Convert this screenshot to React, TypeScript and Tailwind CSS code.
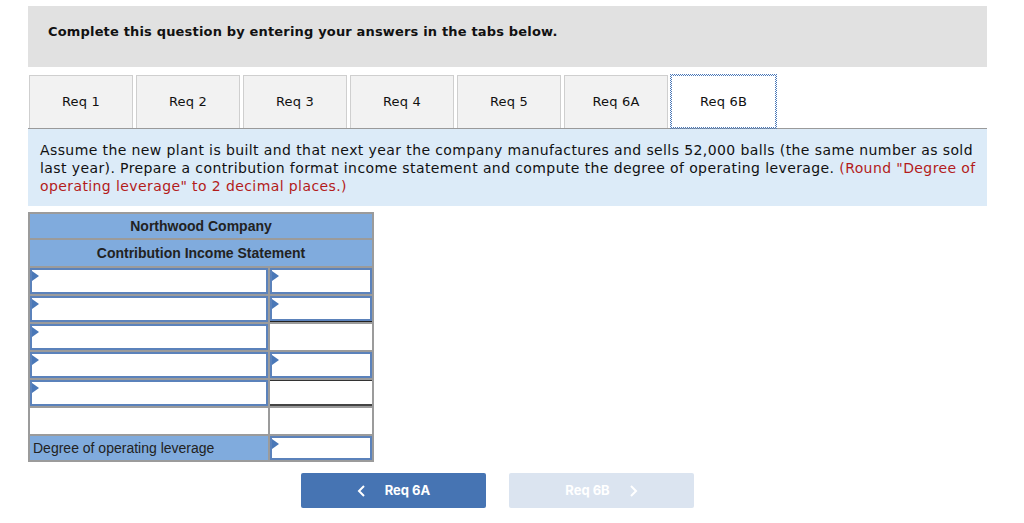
import React from "react";

const tabs = ["Req 1", "Req 2", "Req 3", "Req 4", "Req 5", "Req 6A", "Req 6B"];

function Marker() {
  return (
    <span className="absolute left-0 top-[1px] w-0 h-0 border-y-[5px] border-y-transparent border-l-[7px] border-l-[#4a78b8]" />
  );
}

function InputCell({ marker = true }: { marker?: boolean }) {
  return (
    <div className="relative h-full border-2 border-[#5b82bb] bg-white">
      {marker && <Marker />}
    </div>
  );
}

type Row = { left: "input" | "plain" | "label"; right: "input" | "plain"; rightExtra?: string; h: string };

const rows: Row[] = [
  { left: "input", right: "input", h: "h-[28px]" },
  { left: "input", right: "input", rightExtra: "border-b border-b-[#222]", h: "h-[28px]" },
  { left: "input", right: "plain", h: "h-[28px]" },
  { left: "input", right: "input", h: "h-[28px]" },
  { left: "input", right: "plain", rightExtra: "border-t border-t-[#333] border-b-2 border-b-[#444]", h: "h-[28px]" },
  { left: "plain", right: "plain", h: "h-[28px]" },
  { left: "label", right: "input", h: "h-[26px]" },
];

export default function App() {
  return (
    <div className="w-[1024px] h-[523px] bg-white font-['DejaVu_Sans',Verdana,sans-serif] text-[#111]">
      <div className="pt-[6px] ml-[28px] w-[959px]">
        {/* Header */}
        <div className="h-[61px] bg-[#e1e1e1] pl-[20px] pt-[16px]">
          <p className="text-[13px] tracking-[0.17px] font-bold leading-[20px]">
            Complete this question by entering your answers in the tabs below.
          </p>
        </div>

        {/* Tabs */}
        <div className="mt-[8px] flex gap-[3px] pl-[1px] border-b border-[#9a9a9a]">
          {tabs.map((t, i) => {
            const active = i === tabs.length - 1;
            return (
              <div
                key={t}
                className={
                  active
                    ? "w-[105px] h-[53px] flex items-center justify-center text-[13px] tracking-[0.2px] bg-white border border-dotted border-[#4a78b8] outline outline-1 outline-dotted outline-[#4a78b8] -mb-px"
                    : "w-[104px] h-[53px] flex items-center justify-center text-[13px] tracking-[0.2px] bg-[#f2f2f2] border border-[#cfcfcf] border-b-0"
                }
              >
                {t}
              </div>
            );
          })}
        </div>

        {/* Instructions */}
        <div className="bg-[#dcebf8] pl-[12px] pt-[12px] h-[77px] text-[14px] tracking-[0.4px] leading-[18px] whitespace-nowrap">
          Assume the new plant is built and that next year the company manufactures and sells 52,000 balls (the same
          number as sold
          <br />
          last year). Prepare a contribution format income statement and compute the degree of operating leverage.{" "}
          <span className="text-[#b31b1b]">(Round "Degree of</span>
          <br />
          <span className="text-[#b31b1b]">operating leverage" to 2 decimal places.)</span>
        </div>

        {/* Table */}
        <div className="mt-[6px] w-[346px] border-2 border-[#9b9b9b] font-['Liberation_Sans',Arial,sans-serif]">
          <div className="h-[26px] bg-[#80abdd] border-b-2 border-[#9b9b9b] flex items-center justify-center text-[14px] font-bold text-[#222]">
            Northwood Company
          </div>
          <div className="h-[26px] bg-[#80abdd] flex items-center justify-center text-[14px] font-bold text-[#222]">
            Contribution Income Statement
          </div>
          {rows.map((r, i) => (
            <div key={i} className={`flex ${r.h} border-t-2 border-[#9b9b9b]`}>
              <div className="w-[240px] h-full border-r-2 border-[#9b9b9b]">
                {r.left === "input" && <InputCell />}
                {r.left === "plain" && <div className="h-full bg-white" />}
                {r.left === "label" && (
                  <div className="h-full bg-[#80abdd] flex items-center pl-[3px] text-[14px] text-[#222]">
                    Degree of operating leverage
                  </div>
                )}
              </div>
              <div className={`flex-1 h-full ${r.rightExtra ?? ""}`}>
                {r.right === "input" ? <InputCell /> : <div className="h-full bg-white" />}
              </div>
            </div>
          ))}
        </div>

        {/* Nav buttons */}
        <div className="mt-[11px] flex gap-[23px] pl-[273px]">
          <button className="w-[185px] h-[35px] rounded-[2px] bg-[#4674b3] text-white text-[13px] font-bold font-['Inter',sans-serif] flex items-center justify-center gap-[18px]">
            <svg width="10" height="14" viewBox="0 0 10 14" fill="none" stroke="white" strokeWidth="2">
              <path d="M7 2 L2 7 L7 12" />
            </svg>
            Req 6A
          </button>
          <button className="w-[185px] h-[35px] rounded-[2px] bg-[#dbe4f0] text-white text-[13px] font-bold font-['Inter',sans-serif] flex items-center justify-center gap-[18px]">
            Req 6B
            <svg width="10" height="14" viewBox="0 0 10 14" fill="none" stroke="white" strokeWidth="2">
              <path d="M3 2 L8 7 L3 12" />
            </svg>
          </button>
        </div>
      </div>
    </div>
  );
}
